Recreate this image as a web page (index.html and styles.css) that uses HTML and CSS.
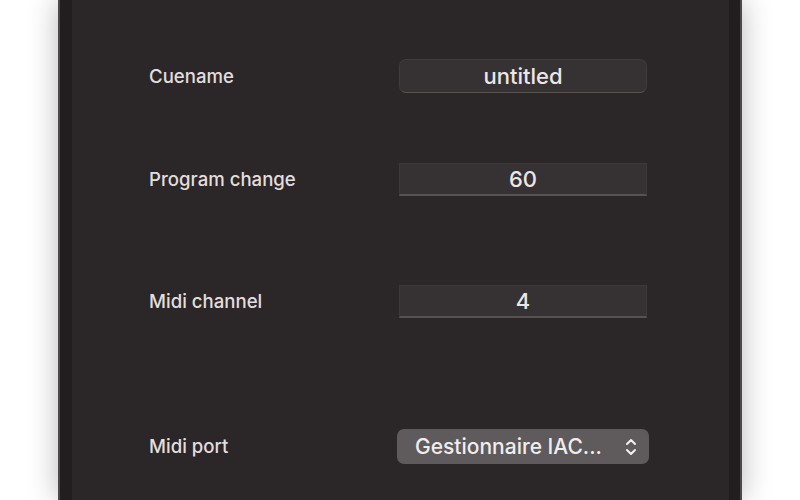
FILE: index.html
```html
<!DOCTYPE html>
<html>
<head>
<meta charset="utf-8">
<link rel="stylesheet" href="styles.css">
</head>
<body>
<div class="window">
  <div class="frame">
    <div class="panel">
      <div class="row row-1">
        <div class="label">Cuename</div>
        <div class="field field-round">untitled</div>
      </div>
      <div class="row row-2">
        <div class="label">Program change</div>
        <div class="field field-square">60</div>
      </div>
      <div class="row row-3">
        <div class="label">Midi channel</div>
        <div class="field field-square">4</div>
      </div>
      <div class="row row-4">
        <div class="label">Midi port</div>
        <div class="popup">
          <span class="popup-text">Gestionnaire IAC...</span>
          <svg class="chevrons" width="12" height="20" viewBox="0 0 12 20">
            <path d="M2 7 L6 3 L10 7" fill="none" stroke="#f2eff0" stroke-width="2" stroke-linecap="round" stroke-linejoin="round"/>
            <path d="M2 13 L6 17 L10 13" fill="none" stroke="#f2eff0" stroke-width="2" stroke-linecap="round" stroke-linejoin="round"/>
          </svg>
        </div>
      </div>
    </div>
  </div>
</div>
</body>
</html>
```

FILE: styles.css
```css
html, body {
  margin: 0;
  padding: 0;
  background: #ffffff;
  height: 500px;
  overflow: hidden;
}

body {
  font-family: Inter, "Noto Sans", "Liberation Sans", sans-serif;
}

.window {
  margin-left: 58px;
  width: 684px;
  height: 500px;
  box-sizing: border-box;
  border-left: 2px solid #4b494a;
  border-right: 2px solid #4b494a;
  box-shadow: 0 0 28px rgba(0, 0, 0, 0.28);
}

.frame {
  height: 100%;
  box-sizing: border-box;
  padding: 0 11px 0 12px;
  background: #221e20;
}

.panel {
  height: 100%;
  background: #2b2628;
  padding-left: 77px;
  padding-top: 59px;
  box-sizing: border-box;
  display: flex;
  flex-direction: column;
}

.row {
  display: flex;
  align-items: center;
}

.row-2 { margin-top: 70px; }
.row-3 { margin-top: 89px; }
.row-4 { margin-top: 111px; }

.label {
  width: 250px;
  color: #e2dedf;
  font-size: 18.6px;
  font-weight: 500;
  margin-top: -1px;
}

.field {
  width: 248px;
  box-sizing: border-box;
  background: #363132;
  color: #ebe7e8;
  font-size: 22px;
  font-weight: 500;
  text-align: center;
}

.field-round {
  height: 34px;
  line-height: 32px;
  border-radius: 7px;
  border: 1px solid #403b3d;
  border-bottom-color: #58534f;
}

.field-square {
  height: 33px;
  line-height: 31px;
  border-top: 1px solid #3d393a;
  border-left: 1px solid #3d393a;
  border-right: 1px solid #3d393a;
  border-bottom: 2px solid #575353;
}

.popup {
  margin-left: -2px;
  width: 252px;
  height: 35px;
  box-sizing: border-box;
  background: #5f5a5b;
  border-radius: 7px;
  display: flex;
  align-items: center;
  padding-left: 18px;
  padding-right: 12px;
  color: #f0edee;
  font-size: 21px;
  font-weight: 500;
}

.popup-text {
  flex: 1;
  margin-top: -1px;
}

.chevrons {
  display: block;
}
```
